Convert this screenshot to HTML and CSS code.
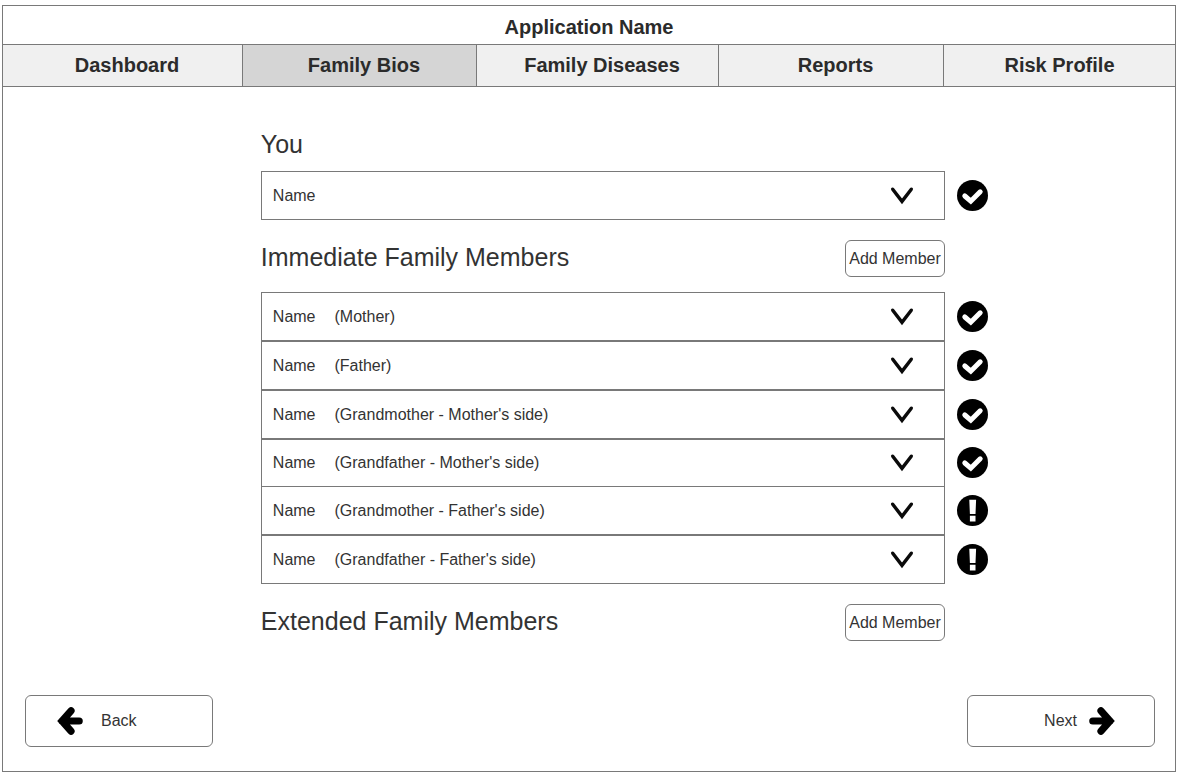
FILE: index.html
```html
<!DOCTYPE html>
<html lang="en">
<head>
<meta charset="utf-8">
<title>Family Bios</title>
<link rel="stylesheet" href="styles.css">
</head>
<body>
<svg class="sprite" aria-hidden="true">
  <symbol id="chevron" viewBox="0 0 24 20"><path d="M2.7 3.2 12 15.4 21.3 3.2" fill="none" stroke="#0a0a0a" stroke-width="3.4" stroke-linecap="round" stroke-linejoin="miter"/></symbol>
  <symbol id="check" viewBox="0 0 31 31"><circle cx="15.5" cy="15.5" r="15.5"/><path d="M7.8 16 13.8 21.2 23.2 11.8" fill="none" stroke="#fff" stroke-width="5" stroke-linecap="round" stroke-linejoin="miter"/></symbol>
  <symbol id="alert" viewBox="0 0 31 31"><circle cx="15.5" cy="15.5" r="15.5"/><path d="M12.3 4.8h6.8l-.6 14.2h-5.6zM12.9 20.8h5.6v5.6h-5.6z" fill="#fff"/></symbol>
  <symbol id="arrow" viewBox="0 0 26 28"><path d="M5 14H22.2M14 3.8 5 14 14 24.2" fill="none" stroke="#000" stroke-width="7.2" stroke-linecap="round" stroke-linejoin="miter"/></symbol>
</svg>
<div class="app">
  <header class="title-bar"><h1 class="title">Application Name</h1></header>
  <nav class="tabs">
    <a class="tab" href="#">Dashboard</a>
    <a class="tab tab-active" href="#" aria-current="page">Family Bios</a>
    <a class="tab" href="#">Family Diseases</a>
    <a class="tab" href="#">Reports</a>
    <a class="tab" href="#">Risk Profile</a>
  </nav>
  <main class="content">
    <section>
      <div class="section-head section-head-you"><h2 class="heading">You</h2></div>
      <div class="member">
        <button class="member-box" type="button" aria-expanded="false"><span>Name</span><svg class="chevron"><use href="#chevron"/></svg></button>
        <svg class="status" role="img" aria-label="Complete"><use href="#check"/></svg>
      </div>
    </section>
    <section>
      <div class="section-head"><h2 class="heading">Immediate Family Members</h2><button class="add" type="button">Add Member</button></div>
      <div class="member">
        <button class="member-box" type="button" aria-expanded="false"><span>Name</span><span>(Mother)</span><svg class="chevron"><use href="#chevron"/></svg></button>
        <svg class="status" role="img" aria-label="Complete"><use href="#check"/></svg>
      </div>
      <div class="member">
        <button class="member-box" type="button" aria-expanded="false"><span>Name</span><span>(Father)</span><svg class="chevron"><use href="#chevron"/></svg></button>
        <svg class="status" role="img" aria-label="Complete"><use href="#check"/></svg>
      </div>
      <div class="member">
        <button class="member-box" type="button" aria-expanded="false"><span>Name</span><span>(Grandmother - Mother's side)</span><svg class="chevron"><use href="#chevron"/></svg></button>
        <svg class="status" role="img" aria-label="Complete"><use href="#check"/></svg>
      </div>
      <div class="member">
        <button class="member-box member-box-joined" type="button" aria-expanded="false"><span>Name</span><span>(Grandfather - Mother's side)</span><svg class="chevron"><use href="#chevron"/></svg></button>
        <svg class="status" role="img" aria-label="Complete"><use href="#check"/></svg>
      </div>
      <div class="member">
        <button class="member-box" type="button" aria-expanded="false"><span>Name</span><span>(Grandmother - Father's side)</span><svg class="chevron"><use href="#chevron"/></svg></button>
        <svg class="status" role="img" aria-label="Needs attention"><use href="#alert"/></svg>
      </div>
      <div class="member">
        <button class="member-box" type="button" aria-expanded="false"><span>Name</span><span>(Grandfather - Father's side)</span><svg class="chevron"><use href="#chevron"/></svg></button>
        <svg class="status" role="img" aria-label="Needs attention"><use href="#alert"/></svg>
      </div>
    </section>
    <section>
      <div class="section-head"><h2 class="heading">Extended Family Members</h2><button class="add" type="button">Add Member</button></div>
    </section>
  </main>
  <footer class="pager">
    <button class="page-button page-back" type="button"><svg class="arrow"><use href="#arrow"/></svg>Back</button>
    <button class="page-button page-next" type="button">Next<svg class="arrow arrow-right"><use href="#arrow"/></svg></button>
  </footer>
</div>
</body>
</html>
```
FILE: styles.css
```css
* { box-sizing: border-box; }

body {
  margin: 0;
  min-height: 100vh;
  padding: 5px 5px 1px 2px;
  display: flex;
  background: #fff;
  color: #333;
  font: 16px/20px "Liberation Sans", Arial, sans-serif;
}

button {
  font: inherit;
  color: inherit;
  background: #fff;
  border: 1px solid #797979;
}

.sprite { position: absolute; width: 0; height: 0; }

.app {
  flex: 1;
  display: flex;
  flex-direction: column;
  border: 1px solid #797979;
}

.title-bar {
  padding: 9px 0 5px;
  text-align: center;
}

.title {
  margin: 0;
  font-size: 20px;
  line-height: 24px;
  color: #2b2b2b;
}

.tabs {
  display: grid;
  grid-template-columns: 240fr 234fr 242fr 225fr 231fr;
  border-top: 1px solid #797979;
  border-bottom: 1px solid #797979;
}

.tab {
  padding: 8px 0 9px 9px;
  border-right: 1px solid #797979;
  background: #f0f0f0;
  color: #2b2b2b;
  font-size: 20px;
  font-weight: bold;
  line-height: 24px;
  text-align: center;
  text-decoration: none;
}

.tab:last-child { padding-left: 0; border-right: 0; }
.tab-active { background: #d5d5d5; }

.content {
  flex: 1;
  display: flex;
  flex-direction: column;
  gap: 20px;
  padding: 40px 187px 20px 22%;
}

.section-head {
  display: flex;
  align-items: center;
  justify-content: space-between;
  min-height: 37px;
  margin: 0 43px 15px 0;
}

.section-head-you { margin-bottom: 7px; }

.heading {
  margin: 0;
  padding-bottom: 4px;
  font-size: 25px;
  font-weight: normal;
  line-height: 30px;
}

.add {
  width: 100px;
  height: 37px;
  padding: 0;
  border-radius: 6px;
}

.member {
  display: grid;
  grid-template-columns: 1fr 31px;
  align-items: center;
  gap: 12px;
}

.member-box {
  display: flex;
  align-items: center;
  gap: 19px;
  min-height: 49px;
  padding: 0 30px 0 11px;
  text-align: left;
}

.member-box-joined { min-height: 47px; border-bottom: 0; }

.chevron { width: 24px; height: 20px; margin-left: auto; }
.status { width: 31px; height: 31px; }

.pager {
  display: flex;
  justify-content: space-between;
  padding: 0 20px 24px 22px;
}

.page-button {
  display: flex;
  align-items: center;
  width: 188px;
  height: 52px;
  border-radius: 6px;
}

.page-back { gap: 18px; padding: 0 0 0 31px; }
.page-next { justify-content: flex-end; gap: 12px; padding: 0 39px 0 0; }

.arrow { width: 26px; height: 28px; }
.arrow-right { transform: scaleX(-1); }
```
